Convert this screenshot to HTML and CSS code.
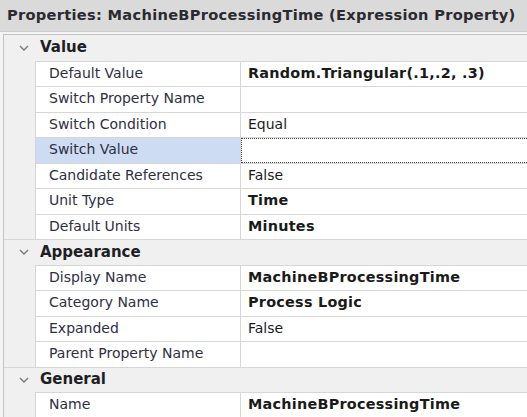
FILE: index.html
```html
<!DOCTYPE html>
<html>
<head>
<meta charset="utf-8">
<link rel="stylesheet" href="styles.css">
</head>
<body>
<div class="panel">
  <div class="title">Properties: MachineBProcessingTime (Expression Property)</div>
  <div class="grid">
    <div class="cat"><span class="chev"><svg width="10" height="6" viewBox="0 0 10 6"><path d="M1 1 L5 5 L9 1" fill="none" stroke="#7a7a7a" stroke-width="1.4"/></svg></span><span class="cat-label">Value</span></div>
    <div class="row"><div class="indent"></div><div class="name">Default Value</div><div class="val b">Random.Triangular(.1,.2, .3)</div></div>
    <div class="row"><div class="indent"></div><div class="name">Switch Property Name</div><div class="val"></div></div>
    <div class="row"><div class="indent"></div><div class="name">Switch Condition</div><div class="val">Equal</div></div>
    <div class="row"><div class="indent"></div><div class="name sel">Switch Value</div><div class="val"><div class="focus"></div></div></div>
    <div class="row"><div class="indent"></div><div class="name">Candidate References</div><div class="val">False</div></div>
    <div class="row"><div class="indent"></div><div class="name">Unit Type</div><div class="val b">Time</div></div>
    <div class="row"><div class="indent"></div><div class="name">Default Units</div><div class="val b">Minutes</div></div>
    <div class="cat"><span class="chev"><svg width="10" height="6" viewBox="0 0 10 6"><path d="M1 1 L5 5 L9 1" fill="none" stroke="#7a7a7a" stroke-width="1.4"/></svg></span><span class="cat-label">Appearance</span></div>
    <div class="row"><div class="indent"></div><div class="name">Display Name</div><div class="val b">MachineBProcessingTime</div></div>
    <div class="row"><div class="indent"></div><div class="name">Category Name</div><div class="val b">Process Logic</div></div>
    <div class="row"><div class="indent"></div><div class="name">Expanded</div><div class="val">False</div></div>
    <div class="row"><div class="indent"></div><div class="name">Parent Property Name</div><div class="val"></div></div>
    <div class="cat"><span class="chev"><svg width="10" height="6" viewBox="0 0 10 6"><path d="M1 1 L5 5 L9 1" fill="none" stroke="#7a7a7a" stroke-width="1.4"/></svg></span><span class="cat-label">General</span></div>
    <div class="row"><div class="indent"></div><div class="name">Name</div><div class="val b">MachineBProcessingTime</div></div>
  </div>
</div>
</body>
</html>
```
FILE: styles.css
```css
html, body {
  margin: 0;
  padding: 0;
  background: #f4f4f4;
  overflow: hidden;
}
.panel {
  width: 527px;
  height: 417px;
  overflow: hidden;
  font-family: "DejaVu Sans", sans-serif;
  font-size: 14px;
}
.title {
  height: 32px;
  box-sizing: border-box;
  background: #dadada;
  border-bottom: 1px solid #cdcdcd;
  padding-left: 7px;
  line-height: 30px;
  font-weight: bold;
  font-size: 14.6px;
  letter-spacing: 0.3px;
  color: #2a2a30;
  white-space: nowrap;
}
.grid {
  margin-top: 2px;
  margin-left: 3px;
  border-left: 1px solid #c4c4c4;
  border-top: 1px solid #c4c4c4;
  background: #f0f0f0;
}
.cat {
  height: 25.5px;
  box-sizing: border-box;
  display: flex;
  align-items: center;
  border-top: 1px solid #d6d6d6;
  background: #f0f0f0;
  padding-bottom: 1px;
}
.cat:first-child {
  border-top: none;
}
.chev {
  width: 36px;
  padding-left: 15px;
  padding-top: 1px;
  box-sizing: border-box;
  display: flex;
  align-items: center;
}
.cat-label {
  font-weight: bold;
  font-size: 15px;
  color: #1e1e24;
}
.row {
  height: 25.5px;
  display: flex;
}
.indent {
  width: 31px;
  flex: none;
}
.name, .val {
  box-sizing: border-box;
  border-top: 1px solid #d6d6d6;
  background: #fff;
  display: flex;
  align-items: center;
  white-space: nowrap;
  overflow: hidden;
  padding-bottom: 2px;
}
.name {
  width: 206px;
  flex: none;
  border-left: 1px solid #d6d6d6;
  border-right: 1px solid #d6d6d6;
  padding-left: 13px;
  color: #2e2e44;
}
.name.sel {
  background: #cddcf3;
}
.val {
  flex: 1;
  padding-left: 7px;
  color: #1a1a1a;
}
.val.b {
  font-weight: bold;
  font-size: 14.4px;
  letter-spacing: 0.25px;
}
.val:has(.focus) {
  padding: 0;
  overflow: visible;
}
.focus {
  flex: none;
  width: calc(100% + 4px);
  height: 100%;
  box-sizing: border-box;
  border: 1px dotted #444;
}
```
